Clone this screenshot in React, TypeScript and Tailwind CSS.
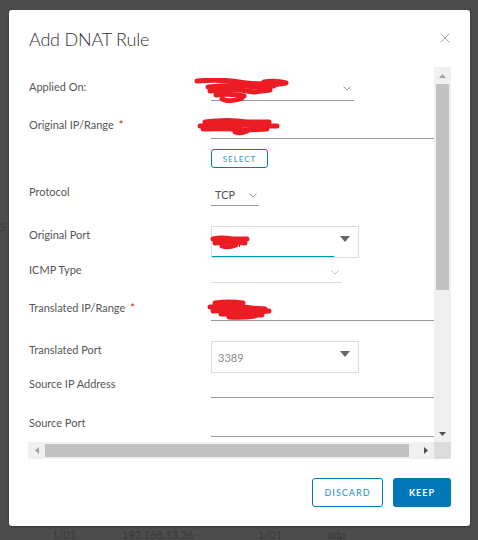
import type { ReactNode } from 'react'

const font = { fontFamily: 'Lato, "Open Sans", sans-serif' }

// hand-drawn red redaction marks, coordinates in px
function Scribble({ className, w, h, d }: { className: string; w: number; h: number; d: string[] }) {
  return (
    <svg className={className} width={w} height={h} viewBox={`0 0 ${w} ${h}`}>
      {d.map((p, i) => (
        <path key={i} d={p} fill="none" stroke="#ec1c24" strokeWidth="5" strokeLinecap="round" strokeLinejoin="round" />
      ))}
    </svg>
  )
}

function Chevron({ className = 'text-[#9a9a9a]' }: { className?: string }) {
  return (
    <svg className={`h-[5px] w-[8px] ${className}`} viewBox="0 0 8 5">
      <path d="M0.5 0.5 4 4 7.5 0.5" fill="none" stroke="currentColor" strokeWidth="1" />
    </svg>
  )
}

function Caret() {
  return (
    <svg className="h-[6px] w-[10px]" viewBox="0 0 10 6">
      <path d="M0 0h10L5 6z" fill="#666" />
    </svg>
  )
}

function Label({ children, required, pt }: { children: ReactNode; required?: boolean; pt: string }) {
  return (
    <div className={`w-[183px] shrink-0 pl-[1px] text-[11px] leading-[14px] text-[#565656] ${pt}`}>
      {children}
      {required && <span className="ml-[5px] text-[#c92100]">*</span>}
    </div>
  )
}

export default function App() {
  return (
    <div className="relative h-[540px] w-[478px] overflow-hidden bg-[#4c4c4c] pl-[9px] pt-[10px]" style={font}>
      {/* page behind the overlay */}
      <div className="absolute left-0 top-[219px] text-[11px] text-[#3e3e3e]">S</div>
      <div className="absolute left-[52px] top-[527px] flex text-[11px] text-[#393939]">
        <span className="w-[70px]">1/01</span>
        <span className="w-[136px]">192.168.13.26</span>
        <span className="w-[69px]">1/01</span>
        <span>udp</span>
      </div>

      <div className="relative flex h-[516px] w-[461px] flex-col rounded-[3px] bg-white shadow-[0_1px_3px_rgba(0,0,0,0.3)]">
        {/* header */}
        <div className="flex h-[57px] items-start justify-between pl-[20px] pr-[20px] pt-[18px]">
          <h1 className="text-[18px] font-light leading-[22px] tracking-[-0.2px] text-[#313131]">Add DNAT Rule</h1>
          <svg className="mt-[5px] h-[10px] w-[10px]" viewBox="0 0 10 10">
            <path d="M0.5 0.5l9 9M9.5 0.5l-9 9" stroke="#a6a6a6" strokeWidth="1" />
          </svg>
        </div>

        {/* scrollable body */}
        <div className="ml-[19px] flex w-[423px] flex-col">
          <div className="flex h-[375px]">
            <div className="w-[406px] overflow-hidden">
              {/* Applied On */}
              <div className="flex h-[43px]">
                <Label pt="pt-[13px]">Applied On:</Label>
                <div className="pt-[10px]">
                  <div className="relative flex h-[24px] w-[143px] items-center justify-end border-b border-[#9a9a9a] pr-[3px]">
                    <Chevron />
                    <Scribble
                      className="absolute left-[-17px] top-[1px]"
                      w={96}
                      h={27}
                      d={[
                        'M3 3 Q25 1 45 4 T70 5',
                        'M70 4 Q82 2 92 5 L78 7',
                        'M14 9 Q40 6 60 9 L80 8',
                        'M16 13 Q40 10 60 14 L76 12',
                        'M22 17 Q35 15 50 18',
                        'M28 21 Q36 25 48 20',
                      ]}
                    />
                  </div>
                </div>
              </div>

              {/* Original IP/Range */}
              <div className="flex h-[35px]">
                <Label pt="pt-[8px]" required>
                  Original IP/Range
                </Label>
                <div className="pt-[4px]">
                  <div className="relative h-[25px] w-[223px] border-b border-[#9a9a9a]">
                    <Scribble
                      className="absolute left-[-14px] top-[4px]"
                      w={84}
                      h={18}
                      d={[
                        'M8 4 Q30 1 50 4 L72 4',
                        'M3 8 Q35 5 60 8 L80 8',
                        'M6 11 Q30 10 50 12 L70 11',
                        'M38 14 Q44 16 50 13',
                      ]}
                    />
                  </div>
                </div>
              </div>

              {/* SELECT */}
              <div className="flex h-[35px]">
                <div className="w-[183px] shrink-0" />
                <div className="pt-[4px]">
                  <div className="flex h-[19px] w-[57px] items-center justify-center rounded-[3px] border border-[#0079b8] text-[8px] font-semibold tracking-[1px] text-[#4a9fd0]">
                    SELECT
                  </div>
                </div>
              </div>

              {/* Protocol */}
              <div className="flex h-[38px]">
                <Label pt="pt-[5px]">Protocol</Label>
                <div className="pt-[4px]">
                  <div className="flex h-[22px] w-[48px] items-center justify-between border-b border-[#9a9a9a] pl-[4px] pr-[2px] pt-[1px]">
                    <span className="text-[11px] text-[#565656]">TCP</span>
                    <Chevron />
                  </div>
                </div>
              </div>

              {/* Original Port */}
              <div className="flex h-[44px]">
                <Label pt="pt-[10px]">Original Port</Label>
                <div className="pt-[8px]">
                  <div className="relative flex h-[32px] w-[148px] items-start justify-end border border-[#dcdcdc] pr-[8px] pt-[9px]">
                    <Caret />
                    <div className="absolute bottom-0 left-0 h-[1px] w-[122px] bg-[#0094b8]" />
                    <div className="absolute left-[27px] top-[10px] h-[10px] w-[1px] bg-[#444]" />
                    <Scribble
                      className="absolute left-[-2px] top-[8px]"
                      w={40}
                      h={15}
                      d={['M3 4 Q12 2 22 4 L37 4', 'M5 8 Q20 6 35 8', 'M12 11 Q18 13 26 10']}
                    />
                  </div>
                </div>
              </div>

              {/* ICMP Type */}
              <div className="flex h-[28px]">
                <Label pt="pt-[1px]">ICMP Type</Label>
                <div className="pt-0">
                  <div className="flex h-[21px] w-[131px] items-center justify-end border-b border-[#dcdcdc] pr-[3px]">
                    <Chevron className="text-[#c4c4c4]" />
                  </div>
                </div>
              </div>

              {/* Translated IP/Range */}
              <div className="flex h-[40px]">
                <Label pt="pt-[11px]" required>
                  Translated IP/Range
                </Label>
                <div className="pt-[9px]">
                  <div className="relative h-[22px] w-[223px] border-b border-[#9a9a9a]">
                    <Scribble
                      className="absolute left-[-4px] top-[0px]"
                      w={66}
                      h={21}
                      d={[
                        'M8 4 Q22 2 36 4',
                        'M3 8 Q25 6 45 9 L58 10',
                        'M6 12 Q30 10 50 13 L62 12',
                        'M14 15 Q35 15 55 16',
                        'M22 18 Q35 19 48 17',
                      ]}
                    />
                  </div>
                </div>
              </div>

              {/* Translated Port */}
              <div className="flex h-[46px]">
                <Label pt="pt-[13px]">Translated Port</Label>
                <div className="pt-[11px]">
                  <div className="flex h-[32px] w-[148px] items-start justify-between border border-[#dcdcdc] pl-[6px] pr-[8px] pt-[9px]">
                    <span className="text-[11px] leading-[14px] text-[#8c8c8c]">3389</span>
                    <Caret />
                  </div>
                </div>
              </div>

              {/* Source IP Address */}
              <div className="flex h-[29px]">
                <Label pt="pt-[1px]">Source IP Address</Label>
                <div className="pt-[1px]">
                  <div className="h-[21px] w-[223px] border-b border-[#9a9a9a]" />
                </div>
              </div>

              {/* Source Port */}
              <div className="flex h-[37px]">
                <Label pt="pt-[11px]">Source Port</Label>
                <div className="pt-[10px]">
                  <div className="h-[22px] w-[223px] border-b border-[#9a9a9a]" />
                </div>
              </div>
            </div>

            {/* vertical scrollbar */}
            <div className="flex w-[17px] flex-col bg-[#f0f0f0]">
              <div className="flex h-[17px] items-center justify-center">
                <svg className="h-[4px] w-[7px]" viewBox="0 0 7 4">
                  <path d="M0 4h7L3.5 0z" fill="#a3a3a3" />
                </svg>
              </div>
              <div className="mx-[2px] h-[206px] bg-[#c1c1c1]" />
              <div className="flex-1" />
              <div className="flex h-[17px] items-center justify-center">
                <svg className="h-[4px] w-[7px]" viewBox="0 0 7 4">
                  <path d="M0 0h7L3.5 4z" fill="#505050" />
                </svg>
              </div>
            </div>
          </div>

          {/* horizontal scrollbar */}
          <div className="flex h-[17px]">
            <div className="flex w-[406px] bg-[#f0f0f0]">
              <div className="flex w-[17px] items-center justify-center">
                <svg className="h-[7px] w-[4px]" viewBox="0 0 4 7">
                  <path d="M4 0v7L0 3.5z" fill="#a3a3a3" />
                </svg>
              </div>
              <div className="my-[2px] w-[364px] bg-[#c1c1c1]" />
              <div className="flex-1" />
              <div className="flex w-[17px] items-center justify-center">
                <svg className="h-[7px] w-[4px]" viewBox="0 0 4 7">
                  <path d="M0 0v7L4 3.5z" fill="#505050" />
                </svg>
              </div>
            </div>
            <div className="w-[17px] bg-[#dcdcdc]" />
          </div>
        </div>

        {/* footer */}
        <div className="flex justify-end gap-[10px] pr-[19px] pt-[19px]">
          <button className="flex h-[29px] w-[71px] items-center justify-center rounded-[3px] border border-[#0079b8] text-[9px] font-semibold tracking-[1px] text-[#4a9fd0]">
            DISCARD
          </button>
          <button className="flex h-[29px] w-[58px] items-center justify-center rounded-[3px] bg-[#0079b8] text-[9px] font-bold tracking-[1px] text-white">
            KEEP
          </button>
        </div>
      </div>
    </div>
  )
}
